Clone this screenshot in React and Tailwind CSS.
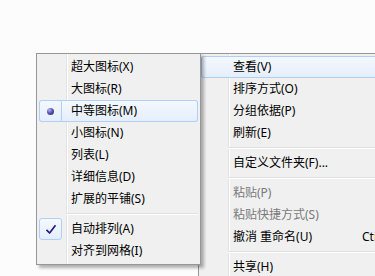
import React from "react";

const gutterBg =
  "bg-[linear-gradient(to_right,#f0f0f0_29px,#e2e3e3_29px,#e2e3e3_30px,#ffffff_30px,#ffffff_31px,#f0f0f0_31px)]";

function Row({ label, icon, hl, disabled, shortcut }) {
  return (
    <div
      className={
        "flex h-[22px] items-center rounded-[3px] " +
        (hl
          ? "bg-gradient-to-b from-[#f5f9fe] to-[#e4eefb] shadow-[inset_0_0_0_1px_#aecff7]"
          : "")
      }
    >
      <div
        className={
          "flex h-[22px] w-[23px] shrink-0 items-center justify-center rounded-[3px] " +
          (icon === "check"
            ? "border border-[#aecff7] bg-gradient-to-b from-[#f5f9fe] to-[#e4eefb]"
            : icon === "dot"
            ? "shadow-[inset_-1px_0_0_#aecff7]"
            : "")
        }
      >
        {icon === "dot" && (
          <div className="h-[7px] w-[7px] rounded-full bg-[radial-gradient(circle_at_35%_30%,#b8b8f0_0%,#5656b8_45%,#1e1e6e_100%)]" />
        )}
        {icon === "check" && (
          <svg width="12" height="11" viewBox="0 0 12 11">
            <path
              d="M1.5 5.8 L4.6 9 L10.5 1.2"
              fill="none"
              stroke="#1d1d8f"
              strokeWidth="1.7"
              strokeLinejoin="round"
            />
          </svg>
        )}
      </div>
      <div
        className={
          "whitespace-nowrap pl-[9px] " +
          (shortcut ? "w-[138px] shrink-0 " : "") +
          (disabled ? "text-[#7a7a7a]" : "text-black")
        }
      >
        {label}
      </div>
      {shortcut && <div className="whitespace-nowrap text-black">{shortcut}</div>}
    </div>
  );
}

function Sep() {
  return (
    <div className="flex h-[8px] flex-col justify-center pl-[27px]">
      <div className="h-px bg-[#e0e0e0]" />
      <div className="h-px bg-white" />
    </div>
  );
}

export default function App() {
  return (
    <div className="flex h-[276px] w-[375px] items-start overflow-hidden bg-[#fcfcfc] pl-[36px] pt-[53px] font-['Noto_Sans','Noto_Sans_CJK_SC',sans-serif] text-[12px] leading-none">
      <div
        className={
          "relative z-10 w-[165px] shrink-0 border border-[#979797] p-[2px] shadow-[3px_3px_3px_rgba(0,0,0,0.3)] " +
          gutterBg
        }
      >
        <Row label="超大图标(X)" />
        <Row label="大图标(R)" />
        <Row label="中等图标(M)" icon="dot" hl />
        <Row label="小图标(N)" />
        <Row label="列表(L)" />
        <Row label="详细信息(D)" />
        <Row label="扩展的平铺(S)" />
        <Sep />
        <Row label="自动排列(A)" icon="check" />
        <Row label="对齐到网格(I)" />
      </div>
      <div
        className={
          "-ml-[3px] w-[220px] shrink-0 border border-[#979797] p-[2px] " +
          gutterBg
        }
      >
        <Row label="查看(V)" hl />
        <Row label="排序方式(O)" />
        <Row label="分组依据(P)" />
        <Row label="刷新(E)" />
        <Sep />
        <Row label="自定义文件夹(F)..." />
        <Sep />
        <Row label="粘贴(P)" disabled />
        <Row label="粘贴快捷方式(S)" disabled />
        <Row label="撤消 重命名(U)" shortcut="Ctrl+Z" />
        <Sep />
        <Row label="共享(H)" />
      </div>
    </div>
  );
}
